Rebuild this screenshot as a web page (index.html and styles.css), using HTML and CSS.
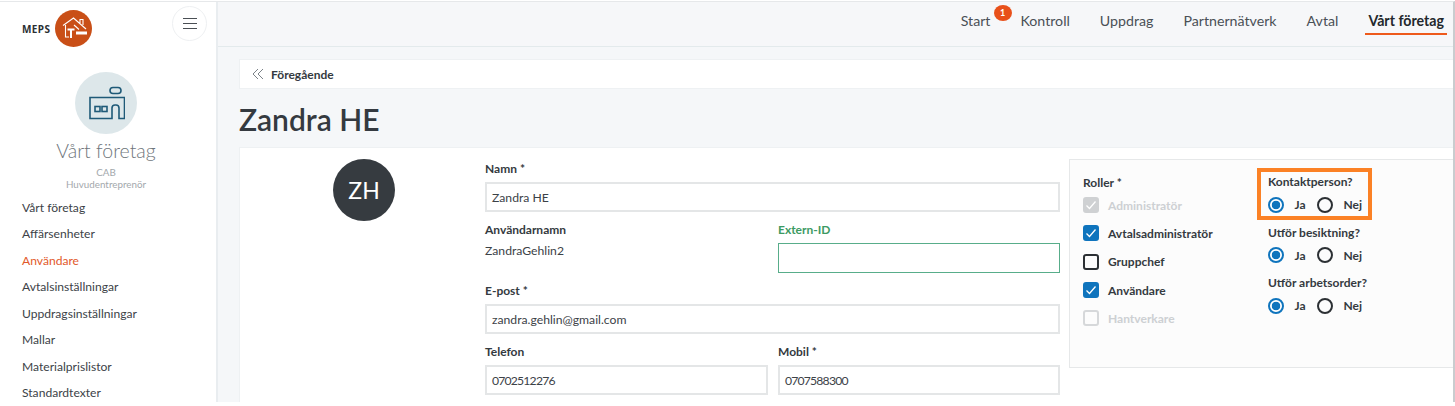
FILE: index.html
```html
<!DOCTYPE html>
<html lang="sv">
<head>
<meta charset="utf-8">
<title>Zandra HE</title>
<link rel="stylesheet" href="styles.css">
</head>
<body>
<div class="app">
  <aside class="sidebar">
    <div class="brand">
      <span class="brand-name">MEPS</span>
      <span class="brand-logo">
        <svg viewBox="0 0 37 37" width="37" height="37"><circle cx="18.500" cy="18.500" r="18.500" fill="#c94f17"/><path d="M8 15.500 L18.500 8 L31 19 M25 13 V9.500 H28 V15 M10.500 15 V27 H14 M19 15 L24 19.500" fill="none" stroke="#fff" stroke-width="1.100"/><path d="M12.500 18.500 h7 v2 h-2.500 v7.500 h-2 v-7.500 h-2.500z M21 21.500 h11 v3 h-11z" fill="#fff"/></svg>
      </span>
      <button class="burger" aria-label="Meny"><span></span><span></span><span></span></button>
    </div>
    <div class="company">
      <span class="company-icon">
        <svg viewBox="0 0 38 34" width="38" height="34" fill="none" stroke="#1f5a78" stroke-width="1.600"><rect x="23" y="1.500" width="11" height="6" rx="3"/><path d="M3 11.500 H37.500 V32.500 H32 V22 Q32 19 29 19 H28 Q25 19 25 22 V32.500 H3 Z"/><rect x="8" y="20.500" width="5" height="5"/><rect x="15" y="20.500" width="5" height="5"/></svg>
      </span>
      <div class="company-title">Vårt företag</div>
      <div class="company-sub first">CAB</div>
      <div class="company-sub">Huvudentreprenör</div>
    </div>
    <nav class="side-nav">
      <a>Vårt företag</a>
      <a>Affärsenheter</a>
      <a class="active">Användare</a>
      <a>Avtalsinställningar</a>
      <a>Uppdragsinställningar</a>
      <a>Mallar</a>
      <a>Materialprislistor</a>
      <a>Standardtexter</a>
    </nav>
  </aside>
  <div class="main">
    <header class="topbar">
      <a class="top-link start">Start<span class="badge">1</span></a>
      <a class="top-link">Kontroll</a>
      <a class="top-link">Uppdrag</a>
      <a class="top-link">Partnernätverk</a>
      <a class="top-link">Avtal</a>
      <a class="top-link current">Vårt företag</a>
    </header>
    <div class="content">
      <div class="backbar">
        <svg viewBox="0 0 12 12" width="12" height="12" fill="none" stroke="#7b8288" stroke-width="1"><path d="M6 1 L1 6 L6 11 M11 1 L6 6 L11 11"/></svg>
        <span>Föregående</span>
      </div>
      <h1>Zandra HE</h1>
      <section class="card">
        <div class="avatar-col"><div class="avatar">ZH</div></div>
        <div class="form">
          <div class="field">
            <label>Namn *</label>
            <div class="input">Zandra HE</div>
          </div>
          <div class="row">
            <div class="field">
              <label>Användarnamn</label>
              <div class="plain">ZandraGehlin2</div>
            </div>
            <div class="field">
              <label class="green">Extern-ID</label>
              <div class="input green-box"></div>
            </div>
          </div>
          <div class="field">
            <label>E-post *</label>
            <div class="input">zandra.gehlin@gmail.com</div>
          </div>
          <div class="row">
            <div class="field">
              <label>Telefon</label>
              <div class="input num">0702512276</div>
            </div>
            <div class="field">
              <label>Mobil *</label>
              <div class="input num">0707588300</div>
            </div>
          </div>
        </div>
        <div class="roles-panel">
          <div class="roles">
            <div class="panel-label">Roller *</div>
            <div class="check disabled"><span class="box on"><svg viewBox="0 0 16 16" width="16" height="16"><path d="M3.500 8.500 L6.500 11.500 L12.500 4.500" fill="none" stroke="#fff" stroke-width="1.300"/></svg></span>Administratör</div>
            <div class="check"><span class="box on"><svg viewBox="0 0 16 16" width="16" height="16"><path d="M3.500 8.500 L6.500 11.500 L12.500 4.500" fill="none" stroke="#fff" stroke-width="1.300"/></svg></span>Avtalsadministratör</div>
            <div class="check"><span class="box"></span>Gruppchef</div>
            <div class="check"><span class="box on"><svg viewBox="0 0 16 16" width="16" height="16"><path d="M3.500 8.500 L6.500 11.500 L12.500 4.500" fill="none" stroke="#fff" stroke-width="1.300"/></svg></span>Användare</div>
            <div class="check disabled"><span class="box"></span>Hantverkare</div>
          </div>
          <div class="questions">
            <div class="question highlight">
              <div class="panel-label">Kontaktperson?</div>
              <div class="radios"><span class="radio on"></span><span class="opt">Ja</span><span class="radio"></span><span>Nej</span></div>
            </div>
            <div class="question">
              <div class="panel-label">Utför besiktning?</div>
              <div class="radios"><span class="radio on"></span><span class="opt">Ja</span><span class="radio"></span><span>Nej</span></div>
            </div>
            <div class="question">
              <div class="panel-label">Utför arbetsorder?</div>
              <div class="radios"><span class="radio on"></span><span class="opt">Ja</span><span class="radio"></span><span>Nej</span></div>
            </div>
          </div>
        </div>
      </section>
    </div>
  </div>
</div>
</body>
</html>
```
FILE: styles.css
```css
* { box-sizing: border-box; }
html, body { margin: 0; padding: 0; height: 100%; overflow: hidden; }
body { font-family: "Lato", "Noto Sans", sans-serif; color: #343a40; background: #fff; }
.app { display: flex; height: 401px; margin-top: 1px; border-top: 1px solid #e6e8ea; border-right: 2px solid #c9cccf; overflow: hidden; }
.sidebar { width: 218px; flex: none; background: #fff; border-right: 2px solid #e9edf0; overflow: hidden; }
.brand { position: relative; display: flex; align-items: center; height: 37px; padding-left: 22px; margin-top: 8px; }
.brand-name { font-family: "Noto Sans", sans-serif; font-size: 10px; font-weight: 700; letter-spacing: .4px; color: #2b2f33; width: 33px; }
.brand-logo { width: 37px; height: 37px; }
.brand-logo svg { display: block; }
.burger { position: absolute; left: 172px; top: -4px; width: 35px; height: 35px; border-radius: 50%; border: 1px solid #eef0f2; background: #fff; display: flex; flex-direction: column; justify-content: center; align-items: center; gap: 4px; padding: 0; }
.burger span { display: block; width: 14px; height: 1px; background: #4a4f54; }
.company { display: flex; flex-direction: column; align-items: center; margin-top: 25px; padding-right: 4px; }
.company-icon { width: 62px; height: 62px; border-radius: 50%; background: #dde7ea; display: flex; align-items: center; justify-content: center; }
.company-title { font-size: 19.500px; line-height: 28px; color: #6e757b; margin-top: 3px; font-weight: 300; }
.company-sub { font-size: 9.800px; line-height: 12px; color: #a3a8ac; }
.company-sub.first { margin-top: 1px; }
.side-nav { display: flex; flex-direction: column; margin-top: 4.500px; padding-left: 22px; }
.side-nav a { font-size: 12.100px; line-height: 26.500px; color: #3c4247; }
.side-nav a.active { color: #e2592a; }
.main { flex: 1; min-width: 0; background: #f5f7f9; }
.topbar { height: 45px; border-bottom: 1px solid #e3eaec; background: #f6f7f9; display: flex; justify-content: flex-end; gap: 24px; padding-right: 6px; }
.top-link { position: relative; font-size: 14.200px; line-height: 38px; height: 38px; color: #4a5056; padding: 0 3px; }
.top-link.current { font-weight: 700; color: #23282c; border-bottom: 2px solid #ee5a1c; height: 33px; }
.badge { position: absolute; left: 36px; top: 3px; width: 18px; height: 16px; border-radius: 50%; background: #e8501a; color: #fff; font-size: 9px; font-weight: 700; line-height: 16px; text-align: center; }
.content { padding: 12px 0 0 21px; }
.backbar { height: 30px; background: #fff; border: 1px solid #eef1f3; border-right: 0; display: flex; align-items: center; gap: 7px; padding-left: 12px; font-size: 12px; font-weight: 700; color: #343a40; }
h1 { margin: 10px 0 0; font-size: 30px; font-weight: 600; line-height: 40px; color: #343a40; }
.card { margin-top: 8px; background: #fff; border: 1px solid #eef1f3; border-right: 0; display: flex; height: 260px; padding-top: 12px; }
.avatar-col { width: 245px; flex: none; display: flex; justify-content: center; }
.avatar { width: 62px; height: 62px; border-radius: 50%; background: #363b40; color: #fff; font-size: 23px; display: flex; align-items: center; justify-content: center; margin: -1px 0 0 3px; }
.form { width: 575px; flex: none; display: flex; flex-direction: column; gap: 9px; }
.row { display: grid; grid-template-columns: 283px 282px; gap: 10px; }
.field label { display: block; font-size: 12px; font-weight: 700; line-height: 16px; padding-top: 1px; color: #343a40; margin-bottom: 5px; }
label.green { color: #3c9a63; }
.input { height: 30px; border: 2px solid #e4e6e7; background: #fff; font-size: 12.200px; line-height: 27px; padding-left: 5px; color: #3c4247; }
.num { letter-spacing: -.8px; }
.green-box { border: 1px solid #58ad8a; }
.plain { font-size: 12.200px; line-height: 16px; color: #3c4247; margin-top: 2px; }
.roles-panel { position: relative; margin-left: 9px; margin-top: -1px; width: 400px; height: 209px; background: #fcfcfc; border: 1px solid #e6e8e9; border-right: 0; display: flex; padding: 14px 0 0 13px; }
.panel-label { font-size: 12px; font-weight: 700; line-height: 16px; color: #343a40; }
.roles { width: 185px; margin-top: 1px; }
.check { display: flex; align-items: center; gap: 9px; height: 28.300px; font-size: 12px; font-weight: 700; color: #343a40; }
.check.disabled { color: #cdd0d3; }
.box { width: 16px; height: 16px; border: 2px solid #2c3034; border-radius: 3px; display: block; flex: none; }
.box svg { display: block; margin: -2px; }
.box.on { background: #0f74bd; border-color: #0f74bd; }
.disabled .box { border-color: #d6d8da; }
.disabled .box.on { background: #cfd1d3; border-color: #cfd1d3; }
.questions { display: flex; flex-direction: column; width: 105px; gap: 11px; }
.question { position: relative; display: flex; flex-direction: column; gap: 5.500px; }
.highlight::after { content: ""; position: absolute; left: -11px; top: -6px; width: 107px; height: 44px; border: 4px solid #fb8125; }
.radios { display: flex; align-items: center; font-size: 12px; font-weight: 700; color: #343a40; height: 18px; }
.radio { width: 16px; height: 16px; border-radius: 50%; border: 2px solid #2c3034; flex: none; margin-right: 10.500px; }
.radio.on { border-color: #0f74bd; background: radial-gradient(circle, #0f74bd 0 4px, #fff 4.600px); }
.opt { width: 22.500px; }
```
